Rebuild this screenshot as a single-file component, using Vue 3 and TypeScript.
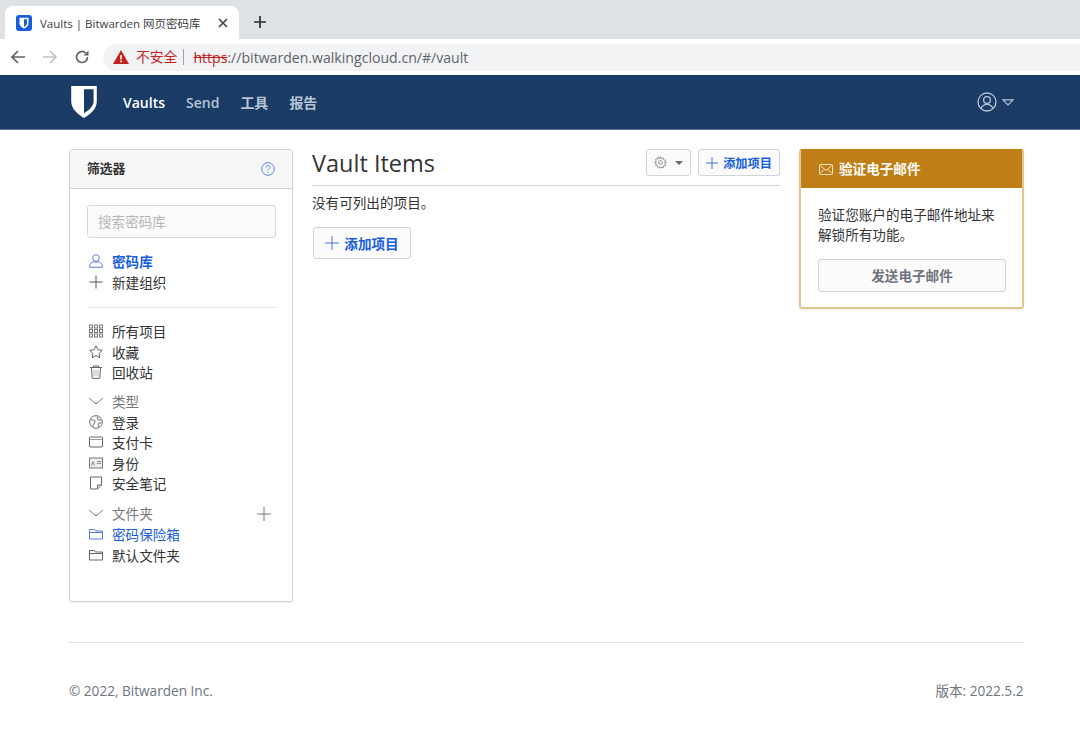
<script setup lang="ts">
const gridCells: number[][] = [
  [0.5, 1], [5.5, 1], [10.5, 1],
  [0.5, 5.5], [5.5, 5.5], [10.5, 5.5],
  [0.5, 10], [5.5, 10], [10.5, 10],
]
</script>

<template>
  <div class="page">
    <div class="tabstrip">
      <div class="tab">
        <svg class="favicon" viewBox="0 0 16 16" width="16" height="16">
          <rect width="16" height="16" rx="3" fill="#175ddc" />
          <path d="M3.5 2.800h9v5.600c0 2.400-2.400 4-4.500 5-2.100-1-4.500-2.600-4.500-5z" fill="#fff" />
          <path d="M8 4.200h3v4.200c0 1.500-1.600 2.600-3 3.400z" fill="#175ddc" />
        </svg>
        <span class="tab-title">Vaults | Bitwarden 网页密码库</span>
        <svg class="tab-x" viewBox="0 0 10 10" width="10" height="10"><path d="M1 1l8 8M9 1l-8 8" stroke="#3c4043" stroke-width="1.600" /></svg>
      </div>
      <svg class="new-tab" viewBox="0 0 12 12" width="12" height="12"><path d="M6 0v12M0 6h12" stroke="#2d2f33" stroke-width="1.700" /></svg>
    </div>
    <div class="toolbar">
      <svg class="tool" viewBox="0 0 16 16" width="16" height="16"><path d="M15 8H2M8 2 2 8l6 6" fill="none" stroke="#5f6368" stroke-width="1.700" /></svg>
      <svg class="tool" viewBox="0 0 16 16" width="16" height="16"><path d="M1 8h13M8 2l6 6-6 6" fill="none" stroke="#bdc1c6" stroke-width="1.700" /></svg>
      <svg class="tool" viewBox="0 0 16 16" width="16" height="16"><path d="M13.500 8A5.500 5.500 0 1 1 11.800 4" fill="none" stroke="#5f6368" stroke-width="1.700" /><path d="M14.500 1.500v5h-5z" fill="#5f6368" /></svg>
      <div class="omnibox">
        <svg viewBox="0 0 16 14" width="16" height="14"><path d="M8 0l8 14H0z" fill="#c5221f" /><path d="M7.200 5h1.600v4.600H7.200zM7.200 10.600h1.600v1.600H7.200z" fill="#fff" /></svg>
        <span class="insecure">不安全</span>
        <span class="omni-sep"></span>
        <span class="url"><s class="https">https</s>://bitwarden.walkingcloud.cn/#/vault</span>
      </div>
    </div>
    <nav class="navbar">
      <div class="container nav-inner">
        <svg class="logo" viewBox="2 1 20 25" width="26" height="32">
          <path d="M2 1h20v12c0 6-5 10-10 13C7 23 2 19 2 13z" fill="#fff" />
          <path d="M12 3.500h7.500V13c0 4-3.700 7-7.500 9.200z" fill="#1a3b66" />
        </svg>
        <a class="nav-link active">Vaults</a>
        <a class="nav-link">Send</a>
        <a class="nav-link">工具</a>
        <a class="nav-link">报告</a>
        <div class="account">
          <svg viewBox="0 0 20 20" width="20" height="20" fill="none" stroke="#b9c4d2" stroke-width="1.300">
            <circle cx="10" cy="10" r="9" />
            <circle cx="10" cy="8" r="3.400" />
            <path d="M4.200 16.500c1-3 3-4.200 5.800-4.200s4.800 1.200 5.800 4.200" />
          </svg>
          <svg viewBox="0 0 12 7" width="12" height="7" fill="none" stroke="#b9c4d2" stroke-width="1.200"><path d="M.8.800h10.400L6 6z" /></svg>
        </div>
      </div>
    </nav>

    <main class="container content">
      <aside class="card filters">
        <div class="filter-head">
          <span>筛选器</span>
          <svg viewBox="0 0 14 14" width="14" height="14" fill="none" stroke="#5a7fe0" stroke-width="1">
            <circle cx="7" cy="7" r="6.300" />
            <path d="M5 5.500C5 4 6 3.500 7 3.500s2 .7 2 1.800C9 6.800 7 7 7 8.500M7 10v1" />
          </svg>
        </div>
        <div class="filter-body">
          <div class="search">搜索密码库</div>

          <ul class="list list-first">
            <li class="bold-blue">
              <svg class="ic" viewBox="0 0 14 14"><circle cx="7" cy="4" r="3.300" stroke="#5a7fe0" /><path d="M.8 13.300V12c0-2.600 2.200-4 3.700-4h5c1.500 0 3.700 1.400 3.700 4v1.300z" stroke="#5a7fe0" /></svg>
              密码库
            </li>
            <li>
              <svg class="ic" viewBox="0 0 14 14"><path d="M7 .5v13M.5 7h13" stroke="#555" /></svg>
              新建组织
            </li>
          </ul>
          <div class="divider"></div>
          <ul class="list">
            <li>
              <svg class="ic" viewBox="0 0 14 14" stroke="#777"><rect v-for="p in gridCells" :key="p.join()" :x="p[0]" :y="p[1]" width="3" height="3" /></svg>
              所有项目
            </li>
            <li>
              <svg class="ic" viewBox="0 0 14 14"><path d="M7 .8l1.900 4 4.400.5-3.200 3 .8 4.400L7 10.600l-3.900 2.100.8-4.400-3.200-3 4.400-.5z" stroke="#666" /></svg>
              收藏
            </li>
            <li>
              <svg class="ic" viewBox="0 0 14 14"><path d="M4 5h6v6.500H4z" fill="#ddd" /><path d="M1 2.500h12M2.500 2.500l.7 10.800h7.600l.7-10.800M4.500 2.500V1h5v1.500" stroke="#666" /></svg>
              回收站
            </li>
          </ul>
          <div class="group-title">
            <svg class="ic" viewBox="0 0 14 14"><path d="M0 4l7 6 7-6" stroke="#777" /></svg>
            类型
          </div>
          <ul class="list nudged">
            <li>
              <svg class="ic" viewBox="0 0 14 14"><circle cx="7" cy="7" r="6.300" stroke="#666" /><path d="M2 4.500c1.500 0 2.500 1 3.500 1S6 7.500 5 8.500 3.500 10 4 12M9 1.500C8 3 8 4 9.500 4.500S12 6 12.500 5M9.500 12.500C9 10.500 9 8.500 10.500 8S12.500 8 13 8.500" stroke="#999" stroke-width="1.400" /></svg>
              登录
            </li>
            <li>
              <svg class="ic" viewBox="0 0 14 14"><rect x=".5" y="2" width="13" height="10" rx="1" stroke="#666" /><path d="M.5 4.500h13" stroke="#999" /></svg>
              支付卡
            </li>
            <li>
              <svg class="ic" viewBox="0 0 14 14"><rect x=".5" y="2" width="13" height="10" stroke="#777" fill="#eee" /><path d="M2.500 9.500l1.500-4 1.500 4M8 5.500h4M8 7.500h4" stroke="#888" /></svg>
              身份
            </li>
            <li>
              <svg class="ic" viewBox="0 0 14 14"><path d="M1.500 1h11v8l-4 4h-7zM12.500 9h-4v4" stroke="#666" /></svg>
              安全笔记
            </li>
          </ul>
          <div class="group-title folder-title">
            <svg class="ic" viewBox="0 0 14 14"><path d="M0 4l7 6 7-6" stroke="#777" /></svg>
            文件夹
            <svg class="folder-add" viewBox="0 0 14 14" width="14" height="14" fill="none"><path d="M7 0v14M0 7h14" stroke="#777" /></svg>
          </div>
          <ul class="list nudged">
            <li class="blue">
              <svg class="ic" viewBox="0 0 14 14"><path d="M.5 12V2.500h5l1 1.500h7v8z M.5 5.500h13" stroke="#5a7fe0" /></svg>
              密码保险箱
            </li>
            <li>
              <svg class="ic" viewBox="0 0 14 14"><path d="M.5 12V2.500h5l1 1.500h7v8z M.5 5.500h13" stroke="#666" /></svg>
              默认文件夹
            </li>
          </ul>
        </div>
      </aside>

      <section class="vault">
        <div class="vault-head">
          <h1>Vault Items</h1>
          <div class="vault-actions">
            <button class="btn gear">
              <svg viewBox="0 0 14 14" width="13" height="13" fill="none" stroke="#999" stroke-width="1.100"><circle cx="7" cy="7" r="2" /><path d="M7 1l1 1.600 1.900-.4.500 1.800 1.800.6-.5 1.900L13 7l-1.300 1.300.5 1.900-1.800.5-.5 1.800-1.900-.4L7 13l-1-1.300-1.900.4-.5-1.800-1.800-.5.5-1.900L1 7l1.300-1.400-.5-1.900 1.800-.6.5-1.800L6 2.600z" /></svg>
              <span class="caret"></span>
            </button>
            <button class="btn add small">
              <svg viewBox="0 0 12 12" width="12" height="12"><path d="M6 0v12M0 6h12" stroke="#4a70e0" /></svg>
              添加项目
            </button>
          </div>
        </div>
        <p class="empty">没有可列出的项目。</p>
        <button class="btn add big">
          <svg viewBox="0 0 14 14" width="14" height="14"><path d="M7 0v14M0 7h14" stroke="#4a70e0" /></svg>
          添加项目
        </button>
      </section>

      <aside class="card verify">
        <div class="verify-head">
          <svg viewBox="0 0 14 11" width="14" height="11" fill="none" stroke="#f7e6c4"><rect x=".5" y=".5" width="13" height="10" rx="1" /><path d="M1 1.500l6 5 6-5M1 9.500l4-4M13 9.500l-4-4" /></svg>
          <span class="verify-title">验证电子邮件</span>
        </div>
        <div class="verify-body">
          <p>验证您账户的电子邮件地址来<br />解锁所有功能。</p>
          <button class="btn send">发送电子邮件</button>
        </div>
      </aside>
    </main>

    <footer class="container footer">
      <span>© 2022, Bitwarden Inc.</span>
      <span class="version">版本: 2022.5.2</span>
    </footer>
  </div>
</template>

<style scoped>
.page {
  width: 1080px;
  height: 729px;
  overflow: hidden;
  background: #fff;
  color: #333;
  font-family: "Open Sans", "Noto Sans CJK SC", sans-serif;
  font-size: 13.6px;
}
.tabstrip {
  height: 39px;
  background: #dee1e6;
  display: flex;
  align-items: flex-end;
  box-sizing: border-box;
  padding-left: 5px;
}
.tab {
  width: 234px;
  height: 33px;
  background: #fff;
  border-radius: 8px 8px 0 0;
  display: flex;
  align-items: center;
  box-sizing: border-box;
  padding: 0 11px;
  font-size: 11.5px;
  color: #3c4043;
}
.tab-title {
  margin-left: 8px;
  flex: 1;
  white-space: nowrap;
}
.new-tab {
  margin: 0 0 11px 15px;
}
.toolbar {
  height: 36px;
  background: #fff;
  display: flex;
  align-items: center;
  padding-left: 10px;
  gap: 16px;
}
.omnibox {
  flex: 1;
  height: 27px;
  margin-left: -3px;
  background: #f1f3f4;
  border-radius: 14px 0 0 14px;
  display: flex;
  align-items: center;
  padding-left: 10px;
  font-size: 14.1px;
}
.insecure {
  color: #c5221f;
  margin: 0 0 2px 7px;
  font-size: 13.8px;
}
.omni-sep {
  width: 1px;
  height: 16px;
  background: #9aa0a6;
  margin: 0 9px 0 6px;
}
.url {
  color: #5f6368;
}
.https {
  color: #c5221f;
}
.navbar {
  height: 55px;
  background: #1a3b66;
  border-bottom: 1px solid #5d7596;
  box-sizing: border-box;
}
.container {
  width: 955px;
  margin: 0 auto 0 69px;
}
.nav-inner {
  height: 100%;
  display: flex;
  align-items: center;
  font-weight: 600;
  font-size: 14px;
}
.logo {
  margin: 0 26px 0 2px;
}
.nav-link {
  color: #b9c4d2;
  margin-right: 21px;
}
.nav-link.active {
  color: #fff;
}
.account {
  margin-left: auto;
  margin-right: 10px;
  display: flex;
  align-items: center;
  gap: 5px;
}
.content {
  display: flex;
  align-items: flex-start;
  margin-top: 19px;
  height: 453px;
  padding-bottom: 40px;
  border-bottom: 1px solid #dcdfe4;
}
.card {
  border: 1px solid #ced4da;
  border-radius: 3px;
  box-sizing: border-box;
}
.filters {
  width: 224px;
  height: 453px;
  box-shadow: 0 1px 2px rgba(0, 0, 0, 0.08);
}
.filter-head {
  height: 38px;
  background: #f6f6f7;
  border-bottom: 1px solid #ced4da;
  display: flex;
  align-items: center;
  justify-content: space-between;
  padding: 0 17px;
  font-weight: 600;
  font-size: 12.800px;
}
.filter-head span {
  margin-bottom: 3px;
}
.filter-body {
  padding: 16px 16px 16px 17px;
}
.search {
  height: 33px;
  box-sizing: border-box;
  border: 1px solid #d5d9dd;
  border-radius: 3px;
  background: #fbfbfb;
  padding-left: 10px;
  color: #b5b5b5;
  line-height: 31px;
  font-size: 13.600px;
}
.list {
  list-style: none;
  margin: 0;
  padding: 0;
}
.list-first {
  margin-top: 13px;
}
.nudged {
  margin-top: 0.5px;
}
.list li,
.group-title {
  height: 20.500px;
  display: flex;
  align-items: center;
  white-space: nowrap;
}
.ic {
  width: 14px;
  height: 14px;
  fill: none;
  margin: 0 9px 0 2px;
  flex: none;
}
.bold-blue {
  color: #175ddc;
  font-weight: 700;
}
.blue {
  color: #175ddc;
}
.divider {
  height: 1px;
  background: #e5e7ea;
  margin: 15px 0 13px;
}
.group-title {
  color: #777;
  margin-top: 8px;
}
.folder-title {
  position: relative;
  margin-top: 9.5px;
}
.folder-add {
  position: absolute;
  right: 5px;
  top: 4px;
}
.vault {
  width: 468px;
  margin: 0 19px;
  box-sizing: border-box;
}
.vault-head {
  height: 36px;
  border-bottom: 1px solid #ced4da;
  display: flex;
  align-items: flex-start;
  justify-content: space-between;
}
h1 {
  margin: 0;
  font-size: 23.5px;
  font-weight: 400;
  line-height: 28px;
  color: #333;
}
.vault-actions {
  display: flex;
  gap: 7px;
}
.btn {
  font-family: inherit;
  background: #fbfbfb;
  border: 1px solid #ced4da;
  border-radius: 3px;
  box-sizing: border-box;
  display: flex;
  align-items: center;
  justify-content: center;
  cursor: pointer;
  padding: 0;
}
.gear {
  width: 45px;
  height: 27px;
  gap: 8px;
}
.caret {
  width: 0;
  height: 0;
  border-left: 4px solid transparent;
  border-right: 4px solid transparent;
  border-top: 4px solid #666;
}
.add {
  color: #175ddc;
  font-weight: 600;
}
.add.small {
  width: 82px;
  height: 27px;
  gap: 5px;
  font-size: 12.200px;
}
.add.big {
  width: 98px;
  height: 32px;
  margin-left: 1px;
  gap: 5px;
  font-size: 13.600px;
}
.empty {
  margin: 7px 0 14px;
  line-height: 20px;
  font-size: 13.600px;
}
.verify {
  width: 225px;
  height: 160px;
  border: 2px solid #e3c68e;
  border-top-color: #bf7e16;
  overflow: hidden;
  box-shadow: 0 1px 2px rgba(0, 0, 0, 0.08);
}
.verify-head {
  height: 37px;
  background: #bf7e16;
  color: #fff;
  display: flex;
  align-items: center;
  padding-left: 18px;
  gap: 6px;
  font-weight: 600;
  font-size: 13.600px;
}
.verify-title {
  margin-bottom: 3px;
}
.verify-body {
  padding: 17px 17px 0;
}
.verify-body p {
  margin: 0 0 13px;
  line-height: 20.400px;
  font-size: 13.600px;
}
.send {
  width: 188px;
  height: 33px;
  color: #6d757e;
  font-weight: 600;
  font-size: 13.600px;
}
.footer {
  margin-top: 38px;
  display: flex;
  justify-content: space-between;
  align-items: flex-start;
  color: #6d757e;
  font-size: 13.600px;
}
.version {
  margin: -1px 0.5px 0 0;
}
</style>
